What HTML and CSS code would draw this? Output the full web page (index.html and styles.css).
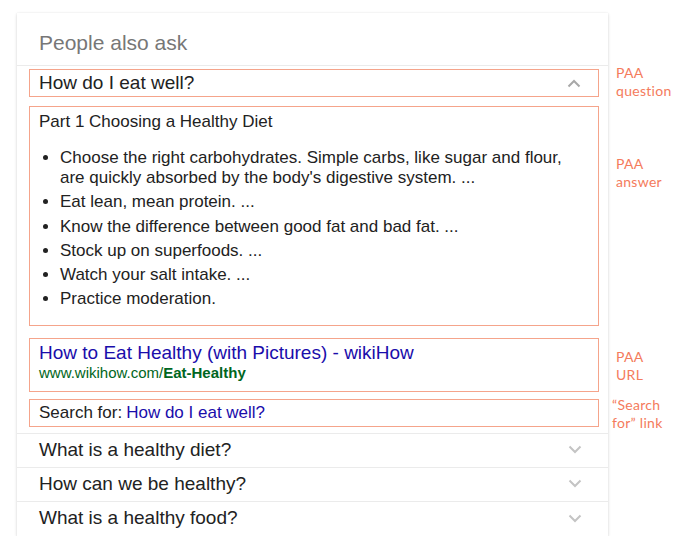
FILE: index.html
```html
<!DOCTYPE html>
<html>
<head>
<meta charset="utf-8">
<link rel="stylesheet" href="styles.css">
</head>
<body>
<div class="card">
  <div class="header">People also ask</div>

  <div class="box question-box">
    <span class="q-text">How do I eat well?</span>
    <svg class="chev" width="14" height="9" viewBox="0 0 14 9"><path d="M1.5 7.5 L7 2 L12.5 7.5" fill="none" stroke="#a8a8a8" stroke-width="2"/></svg>
    <div class="note note-q">PAA<br>question</div>
  </div>

  <div class="box answer-box">
    <div class="part">Part 1 Choosing a Healthy Diet</div>
    <ul class="list">
      <li>Choose the right carbohydrates. Simple carbs, like sugar and flour, are quickly absorbed by the body's digestive system. ...</li>
      <li>Eat lean, mean protein. ...</li>
      <li>Know the difference between good fat and bad fat. ...</li>
      <li>Stock up on superfoods. ...</li>
      <li>Watch your salt intake. ...</li>
      <li>Practice moderation.</li>
    </ul>
    <div class="note note-a">PAA<br>answer</div>
  </div>

  <div class="box url-box">
    <div class="title">How to Eat Healthy (with Pictures) - wikiHow</div>
    <div class="url">www.wikihow.com/<b>Eat-Healthy</b></div>
    <div class="note note-u">PAA<br>URL</div>
  </div>

  <div class="box search-box">
    <span class="sf">Search for: </span><span class="sf-link">How do I eat well?</span>
    <div class="note note-s">“Search<br>for” link</div>
  </div>

  <div class="rows">
    <div class="row"><span>What is a healthy diet?</span><svg class="chev" width="14" height="9" viewBox="0 0 14 9"><path d="M1.5 1.5 L7 7 L12.5 1.5" fill="none" stroke="#c4c4c4" stroke-width="2"/></svg></div>
    <div class="row"><span>How can we be healthy?</span><svg class="chev" width="14" height="9" viewBox="0 0 14 9"><path d="M1.5 1.5 L7 7 L12.5 1.5" fill="none" stroke="#c4c4c4" stroke-width="2"/></svg></div>
    <div class="row"><span>What is a healthy food?</span><svg class="chev" width="14" height="9" viewBox="0 0 14 9"><path d="M1.5 1.5 L7 7 L12.5 1.5" fill="none" stroke="#c4c4c4" stroke-width="2"/></svg></div>
  </div>
</div>
</body>
</html>
```

FILE: styles.css
```css
html, body {
  margin: 0;
  padding: 0;
  background: #fff;
}
body {
  font-family: "Liberation Sans", Arial, sans-serif;
  color: #222;
  padding: 13px 0 0 17px;
}
.card {
  width: 591px;
  background: #fff;
  box-shadow: 0 1px 3px rgba(0,0,0,0.16), 0 0 1px rgba(0,0,0,0.08);
}
.header {
  font-size: 21px;
  line-height: 24px;
  color: #777;
  padding: 18px 0 10px 22px;
  border-bottom: 1px solid #ebebeb;
}
.box {
  position: relative;
  border: 1px solid #f5a48b;
  margin: 0 9px 0 12px;
}
.note {
  position: absolute;
  left: calc(100% + 18px);
  font-family: Lato, "DejaVu Sans", sans-serif;
  font-size: 14px;
  line-height: 18px;
  color: #f47b5c;
  white-space: nowrap;
  letter-spacing: 0.3px;
}
.question-box {
  margin-top: 3px;
  height: 26px;
  display: flex;
  align-items: center;
  justify-content: space-between;
  padding: 0 17px 0 9px;
}
.q-text {
  font-size: 19px;
  line-height: 22px;
}
.note-q { top: -6px; }
.answer-box {
  margin-top: 9px;
  padding: 5px 9px 18px 9px;
  height: 195px;
}
.part {
  font-size: 17px;
  line-height: 20px;
}
.list {
  margin: 16px 0 0 0;
  padding-left: 21px;
  font-size: 17px;
  line-height: 20px;
}
.list li {
  margin-bottom: 4.3px;
}
.note-a { top: 48px; }
.url-box {
  margin-top: 12px;
  height: 49px;
  padding: 3px 9px 0 9px;
}
.title {
  font-size: 19px;
  line-height: 22px;
  color: #1a0dab;
}
.url {
  font-size: 15px;
  line-height: 18px;
  color: #006621;
}
.url b { font-weight: bold; }
.note-u { top: 9px; }
.search-box {
  margin-top: 7px;
  height: 26px;
  display: flex;
  align-items: center;
  padding: 0 9px;
  font-size: 17px;
}
.sf-link {
  color: #1a0dab;
  margin-left: 4px;
}
.note-s { top: -4px; left: calc(100% + 14px); }
.rows {
  margin-top: 6px;
}
.row {
  height: 31px;
  padding: 0 26px 2px 22px;
  border-top: 1px solid #ebebeb;
  display: flex;
  align-items: center;
  justify-content: space-between;
  font-size: 19px;
}
.row:last-child { height: 32px; }
.chev { display: block; }
```
